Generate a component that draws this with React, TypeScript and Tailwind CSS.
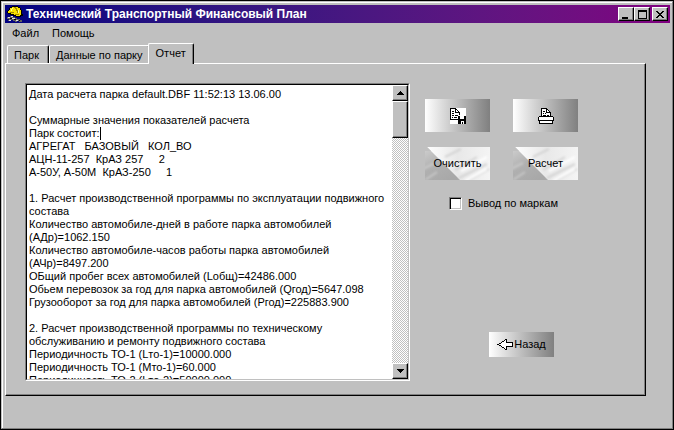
import { useState } from "react";

const REPORT = [
  "Дата расчета парка default.DBF 11:52:13 13.06.00",
  "",
  "Суммарные значения показателей расчета",
  "Парк состоит:",
  "АГРЕГАТ   БАЗОВЫЙ   КОЛ_ВО",
  "АЦН-11-257  КрАЗ 257     2",
  "А-50У, А-50М  КрАЗ-250     1",
  "",
  "1. Расчет производственной программы по эксплуатации подвижного",
  "состава",
  "Количество автомобиле-дней в работе парка автомобилей",
  "(АДр)=1062.150",
  "Количество автомобиле-часов работы парка автомобилей",
  "(АЧр)=8497.200",
  "ОБщий пробег всех автомобилей (Lобщ)=42486.000",
  "Обьем перевозок за год для парка автомобилей (Qгод)=5647.098",
  "Грузооборот за год для парка автомобилей (Pгод)=225883.900",
  "",
  "2. Расчет производственной программы по техническому",
  "обслуживанию и ремонту подвижного состава",
  "Периодичность ТО-1 (Lто-1)=10000.000",
  "Периодичность ТО-1 (Mто-1)=60.000",
  "Периодичность ТО-2 (Lто-2)=50000.000",
].join("\n");

const raised =
  "border border-t-white border-l-white border-r-black border-b-black bg-[#c0c0c0] shadow-[inset_-1px_-1px_0_#808080] flex items-center justify-center";
const metal = "bg-linear-to-r from-white to-[#808080] flex items-center justify-center";

const HelmetIcon = () => (
  <svg width="16" height="16" viewBox="0 0 16 16" shapeRendering="crispEdges" aria-hidden="true">
    <path d="M5 0h6v1h2v1h1v2h1v4h1v2h-2v1H9V10H6V9H3V8H1V7H0V5h1V4h1V2h1V1h2z" fill="#000" />
    <path d="M5 1h6v1h2v2h1v5h-1v1H9V9H7V8H4V7H1V5h1V4h1V2h2z" fill="#f8e000" />
    <path d="M7 1h2v1h1v2h1v3h-1V5H9V3H8V2H7zM3 6h4v1H3zM8 8h4v1H8z" fill="#a08800" />
    <path d="M5 2h1v1H5v2H4V3h1zM11 4h1v3h-1z" fill="#ffff90" />
    <path d="M0 11h3v-1h3v1h2v1h2v1h3v1h2v2h-3v-1h-2v1H8v-1H6v-1H4v1H1v-1h1v-1H0z" fill="#606060" />
    <path d="M1 11h2v1H1zM4 10h2v1H4zM5 12h3v1H5zM2 14h2v1H2zM9 14h2v1H9z" fill="#e0e0e0" />
    <path d="M3 12h2v1H3zM7 13h2v1H7zM12 14h1v1h-1z" fill="#000" />
  </svg>
);

const SaveIcon = () => (
  <svg width="16" height="16" viewBox="0 0 16 16" shapeRendering="crispEdges" aria-hidden="true">
    <path d="M0 0h16v16H0z" fill="#fff" />
    <path
      d="M0 0h6v1H1v10h7v1H0zM5 1h1v3h3v1H5zM6 1h1v1H6zM7 2h1v1H7zM8 3h1v1H8zM9 4h1v3H9zM2 3h2v1H2zM2 5h2v1H2zM2 7h2v1H2zM5 7h3v1H5zM2 9h1v1H2zM4 9h3v1H4z"
      fill="#000"
    />
    <path d="M8 8h8v8H8z" fill="#000" />
    <path d="M10 8h4v3h-4zM11 13h3v3h-1v-2h-1v2h-1z" fill="#fff" />
  </svg>
);

const PrintIcon = () => (
  <svg width="16" height="16" viewBox="0 0 16 16" shapeRendering="crispEdges" aria-hidden="true">
    <path d="M4 1h5l3 3v5H4zM1 9h14v6H1z" fill="#fff" />
    <path
      d="M3 0h6v1H4v7H3zM8 1h1v3h3v1H8zM9 1h1v1H9zM10 2h1v1h-1zM11 3h1v1h-1zM12 4h1v4h-1zM5 3h2v1H5zM5 5h1v1H5zM7 5h1v1H7zM5 7h3v1H5zM9 7h2v1H9zM1 8h14v1H1zM0 9h1v4H0zM15 9h1v4h-1zM1 12h14v1H1zM1 13h1v2H1zM14 13h1v2h-1zM1 15h14v1H1z"
      fill="#000"
    />
  </svg>
);

const BackIcon = () => (
  <svg width="16" height="11" viewBox="0 0 16 11" shapeRendering="crispEdges" aria-hidden="true">
    <path d="M2 5l6-4h1v3h6v3H9v3H8z" fill="#fff" />
    <path
      d="M0 5h2v1H0zM2 4h2v1H2zM4 3h1v1H4zM5 2h2v1H5zM7 1h1v1H7zM8 0h2v1H8zM2 6h2v1H2zM4 7h1v1H4zM5 8h2v1H5zM7 9h1v1H7zM8 10h2v1H8zM9 1h1v3H9zM9 7h1v3H9zM9 3h7v1H9zM9 7h7v1H9zM15 4h1v3h-1z"
      fill="#000"
    />
  </svg>
);

const Marble = () => (
  <svg className="absolute inset-0 h-full w-full" viewBox="0 0 65 33" preserveAspectRatio="none" aria-hidden="true">
    <defs>
      <linearGradient id="vein" x1="0" y1="0" x2="1" y2="0">
        <stop offset="0" stopColor="#ffffff" />
        <stop offset="0.5" stopColor="#e8e8e8" />
        <stop offset="1" stopColor="#f4f4f4" />
      </linearGradient>
      <linearGradient id="shade" x1="0" y1="0" x2="0.7" y2="1">
        <stop offset="0" stopColor="#d0d0d0" />
        <stop offset="0.5" stopColor="#b0b0b0" />
        <stop offset="1" stopColor="#a8a8a8" />
      </linearGradient>
      <filter id="soft">
        <feGaussianBlur stdDeviation="1.2" />
      </filter>
    </defs>
    <path d="M0 0h65v33H0z" fill="url(#vein)" />
    <path d="M0 0h2l33 33H0z" fill="url(#shade)" />
    <g filter="url(#soft)" fill="none" strokeWidth="2">
      <path d="M34 31L62 17M30 23L52 10M44 33l20-11M20 10l16-8" stroke="#d4d4d4" />
      <path d="M0 33L12 25M-2 22l12-6" stroke="#c8c8c8" />
      <path d="M36 24l26-14M40 34l22-12" stroke="#fff" />
    </g>
    <path d="M0 0h2l4 4H0z" fill="#c0c0c0" />
  </svg>
);

const tabs = ["Парк", "Данные по парку", "Отчет"];

const App = () => {
  const [activeTab, setActiveTab] = useState("Отчет");
  const [report, setReport] = useState(REPORT);
  const [byBrand, setByBrand] = useState(false);

  return (
    <div className="min-h-screen flex flex-col border border-black bg-[#c0c0c0] font-['Liberation_Sans',sans-serif] text-[11px] leading-[13px] text-black">
      <div className="flex-1 flex flex-col border border-t-[#c0c0c0] border-l-[#c0c0c0] border-r-[#808080] border-b-[#808080]">
        <div className="flex-1 flex flex-col border-t border-l border-white pt-[2px] pl-[2px] pr-[2px]">
          {/* Title bar */}
          <header className="h-[18px] flex items-center gap-[3px] pl-[2px] pr-[2px] bg-linear-to-r from-[#000080] to-[#800080] text-white">
            <HelmetIcon />
            <h1 className="flex-1 text-[12px] font-bold whitespace-nowrap">
              Технический Транспортный Финансовый План
            </h1>
            <div className="flex">
              <button aria-label="Свернуть" className={`w-4 h-[14px] ${raised}`}>
                <svg width="10" height="9" shapeRendering="crispEdges" aria-hidden="true">
                  <path d="M1 7h6v2H1z" />
                </svg>
              </button>
              <button aria-label="Развернуть" className={`w-4 h-[14px] mr-[2px] ${raised}`}>
                <svg width="9" height="9" shapeRendering="crispEdges" aria-hidden="true">
                  <path d="M0 0h9v9H0zM1 2v6h7V2z" fillRule="evenodd" />
                </svg>
              </button>
              <button aria-label="Закрыть" className={`w-4 h-[14px] ${raised}`}>
                <svg width="8" height="7" shapeRendering="crispEdges" aria-hidden="true">
                  <path d="M0 0h2v1h1v1h2V1h1V0h2v1H7v1H6v1H5v1h1v1h1v1h1v1H6V6H5V5H3v1H2v1H0V6h1V5h1V4h1V3H2V2H1V1H0z" />
                </svg>
              </button>
            </div>
          </header>

          {/* Menu */}
          <nav className="h-5 flex items-center gap-[13px] pl-[7px]">
            <button>Файл</button>
            <button>Помощь</button>
          </nav>

          {/* Tabs, the active one overlaps its neighbour and the page border */}
          <div role="tablist" className="h-5 flex items-end pl-[2px]">
            {tabs.map((tab) => (
              <button
                key={tab}
                role="tab"
                aria-selected={tab === activeTab}
                onClick={() => setActiveTab(tab)}
                className={`min-w-[42px] rounded-t-[2px] border-t border-l border-r border-t-white border-l-white border-r-black bg-[#c0c0c0] shadow-[inset_-1px_0_0_#808080] text-left whitespace-nowrap ${
                  tab === activeTab ? "relative h-[21px] -mb-px -ml-[2px] px-[7px] pb-[2px]" : "h-[18px] px-[6px] pt-px"
                }`}
              >
                {tab}
              </button>
            ))}
          </div>

          {/* Page */}
          <main className="flex-1 flex gap-[15px] mr-6 mb-8 pt-[19px] pl-[19px] pb-[14px] border border-t-white border-l-white border-r-black border-b-black shadow-[inset_-1px_-1px_0_#808080]">
            <div className="flex-1 flex border border-t-[#808080] border-l-[#808080] border-r-white border-b-white">
              <div className="flex-1 flex border border-t-black border-l-black border-r-[#c0c0c0] border-b-[#c0c0c0] bg-white">
                <div className="relative flex-1 flex">
                  <textarea
                    aria-label="Отчет"
                    value={report}
                    onChange={(e) => setReport(e.target.value)}
                    spellCheck={false}
                    className="flex-1 resize-none overflow-hidden whitespace-pre bg-white pl-[2px] pt-[3px] outline-none"
                  />
                  <span className="absolute left-[73px] top-[42px] h-[13px] w-px bg-black" />
                </div>
                <div className="w-4 flex flex-col bg-[repeating-conic-gradient(#c0c0c0_0_25%,#ffffff_0_50%)] bg-size-[2px_2px]">
                  <button aria-label="Вверх" className={`h-4 ${raised}`}>
                    <svg width="7" height="4" shapeRendering="crispEdges" aria-hidden="true">
                      <path d="M3 0h1v1h1v1h1v1h1v1H0V3h1V2h1V1h1z" />
                    </svg>
                  </button>
                  <div className={`h-[37px] ${raised}`} />
                  <button aria-label="Вниз" className={`h-4 mt-auto ${raised}`}>
                    <svg width="7" height="4" shapeRendering="crispEdges" aria-hidden="true">
                      <path d="M0 0h7v1H6v1H5v1H4v1H3V3H2V2H1V1H0z" />
                    </svg>
                  </button>
                </div>
              </div>
            </div>

            <aside className="w-[220px] shrink-0 flex flex-col items-start pt-4 pb-6">
              <div className="grid grid-cols-[65px_65px] auto-rows-[33px] gap-x-[23px] gap-y-[15px]">
                <button aria-label="Сохранить" className={metal}>
                  <SaveIcon />
                </button>
                <button aria-label="Печать" className={metal}>
                  <PrintIcon />
                </button>
                <button className="relative" onClick={() => setReport("")}>
                  <Marble />
                  <span className="relative">Очистить</span>
                </button>
                <button className="relative" onClick={() => setReport(REPORT)}>
                  <Marble />
                  <span className="relative">Расчет</span>
                </button>
              </div>
              <label className="mt-[17px] ml-6 flex items-center gap-[6px]">
                <input
                  type="checkbox"
                  checked={byBrand}
                  onChange={(e) => setByBrand(e.target.checked)}
                  className="size-[13px] appearance-none border border-t-[#808080] border-l-[#808080] border-r-white border-b-white bg-white shadow-[inset_1px_1px_0_#000000,inset_-1px_-1px_0_#c0c0c0] checked:bg-black"
                />
                Вывод по маркам
              </label>
              <button className={`mt-auto ml-16 h-[25px] w-[65px] gap-px ${metal}`}>
                <BackIcon />
                Назад
              </button>
            </aside>
          </main>
        </div>
      </div>
    </div>
  );
};

export default App;
